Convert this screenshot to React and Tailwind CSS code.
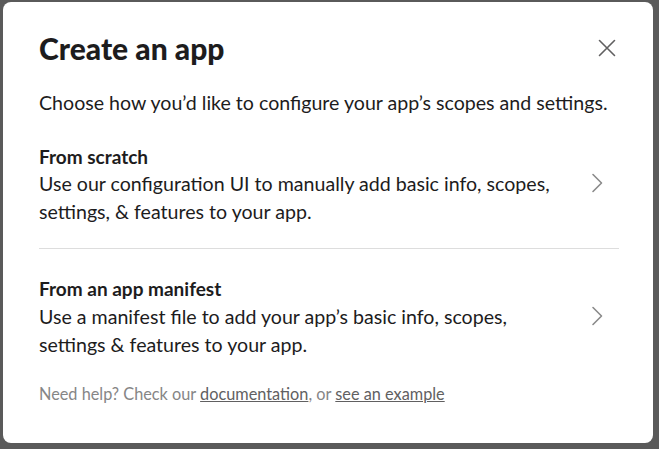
const Chevron = () => (
  <svg
    width="12"
    height="20"
    viewBox="0 0 12 20"
    fill="none"
    stroke="#8a8a8a"
    strokeWidth="1.6"
    strokeLinecap="round"
    strokeLinejoin="round"
    className="mr-[16px] mb-[3px] shrink-0"
  >
    <path d="M2 1.5 10.5 10 2 18.5" />
  </svg>
);

const Option = ({ title, lines, gap = "leading-[27px]" }) => {
  return (
    <div className="flex items-center justify-between">
      <div>
        <div className={`text-[19px] font-bold text-[#1d1c1d] ${gap}`}>
          {title}
        </div>
        <div className="text-[19.6px] leading-[28px] text-[#1d1c1d]">
          {lines.map((line) => (
            <div key={line}>{line}</div>
          ))}
        </div>
      </div>
      <Chevron />
    </div>
  );
};

const App = () => {
  return (
    <div
      className="h-[449px] w-[659px] bg-[#5a5a5a] pt-[2px] pl-[3px] pr-[6px] pb-[6px] flex"
      style={{ fontFamily: "Lato, 'Noto Sans', sans-serif" }}
    >
      <div className="flex-1 rounded-[8px] bg-white pl-[36px] pr-[34px]">
        {/* Header */}
        <div className="flex items-center justify-between pt-[28px]">
          <h1 className="text-[30px] leading-[36px] font-black text-[#1d1c1d]">
            Create an app
          </h1>
          <svg
            width="18"
            height="18"
            viewBox="0 0 18 18"
            stroke="#616061"
            strokeWidth="1.6"
            strokeLinecap="round"
            className="mr-[3px]"
          >
            <path d="M1.5 1.5 16.5 16.5M16.5 1.5 1.5 16.5" />
          </svg>
        </div>

        <p className="mt-[23px] text-[19.6px] leading-[28px] text-[#1d1c1d]">
          Choose how you’d like to configure your app’s scopes and settings.
        </p>

        {/* Options */}
        <div className="mt-[26px]">
          <Option
            title="From scratch"
            lines={[
              "Use our configuration UI to manually add basic info, scopes,",
              "settings, & features to your app.",
            ]}
          />
          <div className="mt-[22px] mb-[26px] border-t border-[#dddddd]" />
          <Option
            title="From an app manifest"
            gap="leading-[28px]"
            lines={[
              "Use a manifest file to add your app’s basic info, scopes,",
              "settings & features to your app.",
            ]}
          />
        </div>

        {/* Footer */}
        <p className="mt-[24px] text-[16.3px] leading-[22px] text-[#868686]">
          Need help? Check our{" "}
          <a href="#" className="underline text-[#616061]">
            documentation
          </a>
          , or{" "}
          <a href="#" className="underline text-[#616061]">
            see an example
          </a>
        </p>
      </div>
    </div>
  );
};

export default App;
